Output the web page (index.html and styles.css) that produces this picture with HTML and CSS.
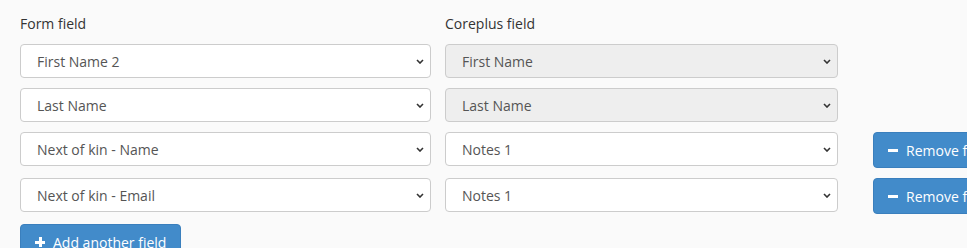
FILE: index.html
```html
<!DOCTYPE html>
<html lang="en">
<head>
    <meta charset="UTF-8">
    <meta name="viewport" content="width=device-width, initial-scale=1.0">
    <title>Field mapping</title>
    <link rel="stylesheet" href="styles.css">
</head>
<body>

    <div class="mapping">
        <div class="mapping-grid">
            <div class="col-label">Form field</div>
            <div class="col-label">Coreplus field</div>
            <div></div>

            <select class="field-select">
                <option>First Name 2</option>
            </select>
            <select class="field-select" disabled>
                <option>First Name</option>
            </select>
            <div></div>

            <select class="field-select">
                <option>Last Name</option>
            </select>
            <select class="field-select" disabled>
                <option>Last Name</option>
            </select>
            <div></div>

            <select class="field-select">
                <option>Next of kin - Name</option>
            </select>
            <select class="field-select">
                <option>Notes 1</option>
            </select>
            <div class="action">
                <button class="btn btn-primary"><span class="icon-minus"></span>Remove field</button>
            </div>

            <select class="field-select">
                <option>Next of kin - Email</option>
            </select>
            <select class="field-select">
                <option>Notes 1</option>
            </select>
            <div class="action">
                <button class="btn btn-primary"><span class="icon-minus"></span>Remove field</button>
            </div>
        </div>

        <button class="btn btn-primary btn-add"><span class="icon-plus"></span>Add another field</button>
    </div>

</body>
</html>
```

FILE: styles.css
```css
/* Field mapping form */
body {
    margin: 0;
    padding: 0;
    background: #fafafa;
    font-family: "Open Sans", Arial, sans-serif;
    font-size: 14px;
    color: #555;
    overflow: hidden;
}

.mapping {
    padding: 14px 20px 0 20px;
    width: 1100px;
}

.mapping-grid {
    display: grid;
    grid-template-columns: 411px 393px 1fr;
    column-gap: 14px;
    row-gap: 10px;
    align-items: start;
}

.col-label {
    color: #333;
    line-height: 20px;
}

.field-select {
    -webkit-appearance: none;
    appearance: none;
    height: 34px;
    margin: 0;
    padding: 0 30px 0 16px;
    font-family: inherit;
    font-size: 14px;
    color: #555;
    background-color: #fff;
    background-image: url("data:image/svg+xml,%3Csvg xmlns='http://www.w3.org/2000/svg' width='8' height='5' viewBox='0 0 8 5'%3E%3Cpath d='M1 1l3 3 3-3' fill='none' stroke='%23333' stroke-width='1.6'/%3E%3C/svg%3E");
    background-repeat: no-repeat;
    background-position: right 6px center;
    border: 1px solid #ccc;
    border-radius: 4px;
}

.field-select:disabled {
    background-color: #eee;
    color: #555;
    opacity: 1;
}

.action {
    padding-left: 21px;
}

.btn {
    display: inline-flex;
    align-items: center;
    height: 36px;
    padding: 0 14px;
    font-family: inherit;
    font-size: 14px;
    color: #fff;
    border: 1px solid #3a7fbd;
    border-radius: 4px;
    white-space: nowrap;
    cursor: pointer;
}

.btn-primary {
    background: #428bca;
}

.btn-add {
    margin-top: 10px;
}

.icon-minus,
.icon-plus {
    position: relative;
    display: inline-block;
    width: 10px;
    height: 10px;
    margin-right: 8px;
}

.icon-minus::before,
.icon-plus::before,
.icon-plus::after {
    content: "";
    position: absolute;
    background: #fff;
}

.icon-minus::before,
.icon-plus::before {
    left: 0;
    top: 4px;
    width: 10px;
    height: 3px;
}

.icon-plus::after {
    left: 4px;
    top: 0;
    width: 3px;
    height: 10px;
}
```
